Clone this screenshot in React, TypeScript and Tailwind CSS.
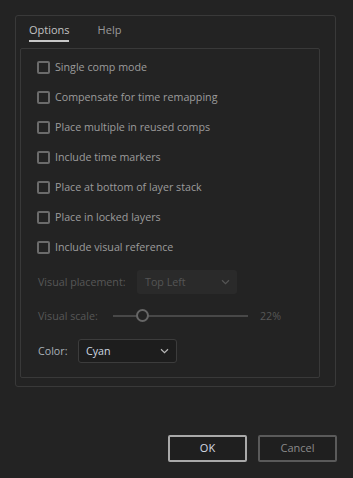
import React from "react";

const items = [
  "Single comp mode",
  "Compensate for time remapping",
  "Place multiple in reused comps",
  "Include time markers",
  "Place at bottom of layer stack",
  "Place in locked layers",
  "Include visual reference",
];

function Chevron({ color }: { color: string }) {
  return (
    <svg width="9" height="6" viewBox="0 0 9 6" fill="none">
      <path d="M1 1.2 L4.5 4.6 L8 1.2" stroke={color} strokeWidth="1.2" />
    </svg>
  );
}

export default function App() {
  return (
    <div
      className="w-[353px] h-[478px] bg-[#232323] flex flex-col overflow-hidden"
      style={{ fontFamily: '"Open Sans", "Noto Sans", sans-serif' }}
    >
      <div className="ml-[15px] mt-[15px] w-[321px] h-[372px] border border-[#393939] rounded-[3px] flex flex-col">
        <div className="flex h-[26px] pl-[13px] pt-[6px] gap-[28px] text-[11px]">
          <div className="flex flex-col">
            <span className="text-[#c2c2c2] leading-[15px]">Options</span>
            <div className="mt-[3px] h-[2px] w-[40px] bg-[#c8c8c8]" />
          </div>
          <span className="text-[#9a9a9a] leading-[15px]">Help</span>
        </div>
        <div className="ml-[4px] mt-[6px] w-[300px] h-[330px] border border-[#393939] rounded-[2px] flex flex-col pl-[16px] pt-[3px]">
          {items.map((t) => (
            <div key={t} className="flex items-center h-[30px]">
              <div className="w-[13px] h-[13px] border-2 border-[#6b6b6b] rounded-[2px]" />
              <span className="ml-[5px] text-[10.7px] text-[#9c9c9c] leading-[14px]">{t}</span>
            </div>
          ))}
          <div className="flex items-center h-[24px] mt-[8px] ml-[1px]">
            <span className="text-[10.7px] text-[#575757] w-[99px]">Visual placement:</span>
            <div className="w-[100px] h-[24px] bg-[#2a2a2a] rounded-[3px] flex items-center justify-between pl-[8px] pr-[7px]">
              <span className="text-[10.7px] text-[#555555]">Top Left</span>
              <Chevron color="#555555" />
            </div>
          </div>
          <div className="flex items-center h-[20px] mt-[12px] ml-[1px]">
            <span className="text-[10.7px] text-[#575757] w-[75px]">Visual scale:</span>
            <div className="relative w-[135px] h-[14px] flex items-center">
              <div className="w-full h-[2px] bg-[#484848]" />
              <div className="absolute left-[23px] top-0 w-[13px] h-[13px] rounded-full border-2 border-[#666666] bg-[#232323]" />
            </div>
            <span className="ml-[12px] text-[10.7px] text-[#575757]">22%</span>
          </div>
          <div className="flex items-center h-[24px] mt-[13px] ml-[1px]">
            <span className="text-[10.7px] text-[#a8b0b8] w-[40px]">Color:</span>
            <div className="w-[99px] h-[24px] bg-[#1d1d1d] border border-[#3c3c3c] rounded-[3px] flex items-center justify-between pl-[7px] pr-[7px]">
              <span className="text-[10.7px] text-[#cfd8e2]">Cyan</span>
              <Chevron color="#b8b8b8" />
            </div>
          </div>
        </div>
      </div>
      <div className="flex justify-end gap-[11px] pr-[16px] mt-[48px]">
        <button className="w-[79px] h-[27px] border-2 border-[#a9a9a9] rounded-[2px] bg-[#1f1f1f] text-[11px] text-[#d6dce4]">
          OK
        </button>
        <button className="w-[79px] h-[27px] border-2 border-[#5a5a5a] rounded-[2px] bg-[#1f1f1f] text-[11px] text-[#8a8a8a]">
          Cancel
        </button>
      </div>
    </div>
  );
}
